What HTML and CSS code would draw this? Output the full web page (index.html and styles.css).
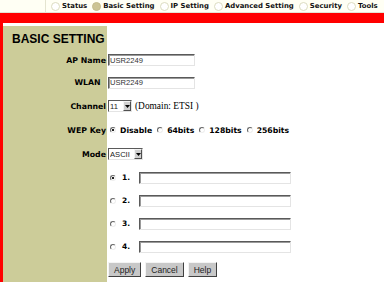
FILE: index.html
```html
<!DOCTYPE html>
<html lang="en">
  <head>
    <meta charset="UTF-8" />
    <title>Basic Setting</title>
    <link rel="stylesheet" href="styles.css">
  </head>
  <body>
    <div class="topbar">
      <div class="corner"></div>
      <ul class="tabs">
        <li><span class="dot"></span>Status</li>
        <li><span class="dot on"></span>Basic Setting</li>
        <li><span class="dot"></span>IP Setting</li>
        <li><span class="dot"></span>Advanced Setting</li>
        <li><span class="dot"></span>Security</li>
        <li><span class="dot"></span>Tools</li>
      </ul>
    </div>
    <div class="redbar"></div>

    <div class="main">
      <form class="settings">
        <div class="label head"><h1>BASIC SETTING</h1></div>
        <div class="field"></div>

        <div class="label">AP Name</div>
        <div class="field"><input type="text" class="text name" value="USR2249" /></div>

        <div class="label">WLAN&nbsp;&nbsp;</div>
        <div class="field"><input type="text" class="text name" value="USR2249" /></div>

        <div class="label">Channel</div>
        <div class="field">
          <span class="select ch"><select><option>11</option></select><span class="arrow"><svg width="5" height="3" viewBox="0 0 5 3"><path d="M0 0h5L2.5 3z" fill="#000"/></svg></span></span>
          <span class="domain">(Domain: ETSI )</span>
        </div>

        <div class="label">WEP Key</div>
        <div class="field opts">
          <label><input type="radio" name="wep" checked />Disable</label>
          <label><input type="radio" name="wep" />64bits</label>
          <label><input type="radio" name="wep" />128bits</label>
          <label><input type="radio" name="wep" />256bits</label>
        </div>

        <div class="label">Mode</div>
        <div class="field">
          <span class="select mode"><select><option>ASCII</option></select><span class="arrow"><svg width="5" height="3" viewBox="0 0 5 3"><path d="M0 0h5L2.5 3z" fill="#000"/></svg></span></span>
        </div>

        <div class="label"></div>
        <div class="field key"><input type="radio" name="key" checked /><b>1.</b><input type="text" class="text long" /></div>

        <div class="label"></div>
        <div class="field key"><input type="radio" name="key" /><b>2.</b><input type="text" class="text long" /></div>

        <div class="label"></div>
        <div class="field key"><input type="radio" name="key" /><b>3.</b><input type="text" class="text long" /></div>

        <div class="label"></div>
        <div class="field key"><input type="radio" name="key" /><b>4.</b><input type="text" class="text long" /></div>

        <div class="label"></div>
        <div class="field buttons">
          <button type="button">Apply</button>
          <button type="button">Cancel</button>
          <button type="button">Help</button>
        </div>
      </form>
    </div>
  </body>
</html>
```

FILE: styles.css
```css
* {
  margin: 0;
  padding: 0;
  box-sizing: border-box;
}

body {
  background: #ffffff;
  font-family: "DejaVu Sans", Verdana, sans-serif;
  color: #000;
  overflow: hidden;
}

.topbar {
  display: flex;
  height: 13px;
  background: #fffff4;
  border-bottom: 1px solid #e4e4d4;
}

.corner {
  width: 46px;
  border-right: 1px solid #e4e4d0;
}

.tabs {
  display: flex;
  list-style: none;
  gap: 5px;
  padding-left: 5px;
  font-size: 6.9px;
  font-weight: bold;
  color: #111;
}

.tabs li {
  display: flex;
  align-items: center;
  gap: 2px;
}

.dot {
  width: 9px;
  height: 9px;
  border-radius: 50%;
  border: 1px solid #dcdcc0;
  background: #ffffff;
}

.dot.on {
  background: #ccc494;
  border-color: #c4bc8c;
}

.redbar {
  height: 10px;
  background: #ff0000;
}

.main {
  border-left: 3px solid #ff0000;
  padding-top: 3px;
  height: calc(100vh - 23px);
}

.settings {
  display: grid;
  grid-template-columns: 104px 1fr;
  grid-template-rows: 23px 22px 23px 24px 24px 24px 23px 23px 23px 23px 1fr;
  height: 100%;
}

.label {
  background: #cccc99;
  display: flex;
  align-items: center;
  justify-content: flex-end;
  padding-right: 1px;
  font-size: 7.8px;
  font-weight: bold;
}

.label.head {
  justify-content: flex-start;
  padding-left: 9px;
}

h1 {
  font-family: "Liberation Sans", Arial, sans-serif;
  font-size: 12px;
  font-weight: bold;
  padding-top: 2px;
}

.field {
  display: flex;
  align-items: center;
  padding-left: 1px;
}

.text {
  height: 12px;
  border: 1px solid;
  border-color: #5a5a5a #e4e4e4 #e4e4e4 #5a5a5a;
  box-shadow: inset 1px 1px 0 #9a9a9a;
  font-family: "Liberation Sans", Arial, sans-serif;
  font-size: 7.6px;
  padding: 0 1px;
  color: #333;
  outline: none;
}

.text.name {
  width: 87px;
}

.text.long {
  width: 152px;
}

.select {
  position: relative;
  display: flex;
  height: 12px;
}

.select select {
  appearance: none;
  height: 12px;
  width: 100%;
  border: 1px solid;
  border-color: #5a5a5a #e4e4e4 #e4e4e4 #5a5a5a;
  background: #fff;
  font-family: "Liberation Sans", Arial, sans-serif;
  font-size: 7.6px;
  padding-left: 1px;
  color: #222;
  outline: none;
}

.select.ch {
  width: 24px;
}

.select.mode {
  width: 35px;
}

.arrow {
  position: absolute;
  right: 1px;
  top: 1px;
  width: 8px;
  height: 10px;
  background: #d0d0d0;
  border: 1px solid;
  border-color: #f4f4f4 #505050 #505050 #f4f4f4;
  display: flex;
  align-items: center;
  justify-content: center;
}

.domain {
  font-family: "Liberation Serif", "Times New Roman", serif;
  font-size: 9.4px;
  margin-left: 3px;
}

input[type="radio"] {
  appearance: none;
  width: 6px;
  height: 6px;
  border-radius: 50%;
  border: 1px solid;
  border-color: #666 #eeeeee #eeeeee #666;
  background: #fff;
  flex-shrink: 0;
}

input[type="radio"]:checked {
  background: radial-gradient(circle, #222 0 1.1px, #fff 1.6px);
}

.opts {
  padding-left: 3px;
  gap: 5px;
  font-size: 7.7px;
  font-weight: bold;
}

.opts label {
  display: flex;
  align-items: center;
  gap: 4px;
}

.key {
  padding-left: 3px;
  font-size: 7.5px;
}

.key b {
  margin-left: 6px;
  width: 17px;
}

.buttons {
  gap: 4px;
  align-items: flex-start;
  padding-top: 4px;
}

button {
  height: 15px;
  padding: 0 5px;
  background: #c8c8c8;
  border: 1px solid;
  border-color: #f4f4f4 #404040 #404040 #f4f4f4;
  font-family: "Liberation Sans", Arial, sans-serif;
  font-size: 8.5px;
  color: #222;
}
```
